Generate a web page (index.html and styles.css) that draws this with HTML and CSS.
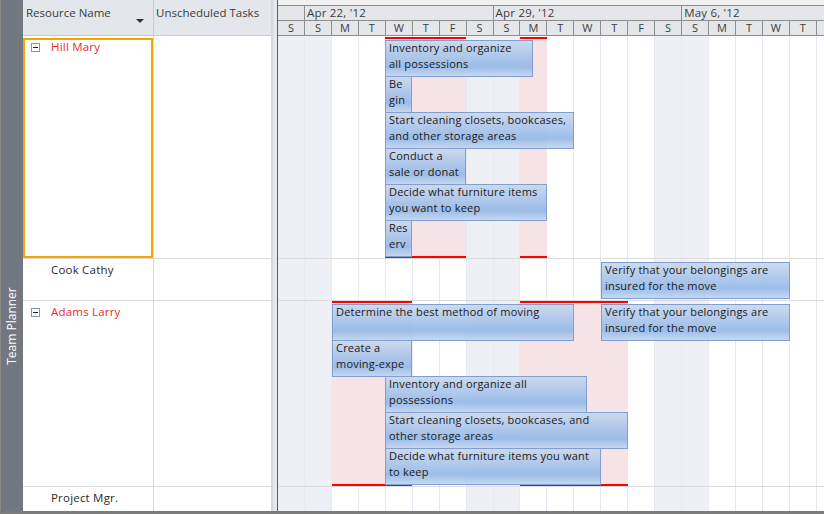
FILE: index.html
```html
<!DOCTYPE html>
<html>
<head>
<meta charset="utf-8">
<link rel="stylesheet" href="styles.css">
</head>
<body>
<div class="app">
  <div class="main">
    <aside class="viewbar"><span class="viewbar-label">Team Planner</span></aside>

    <section class="res-table">
      <div class="th-row">
        <div class="th th-name">Resource Name<span class="sort-arrow"></span></div>
        <div class="th th-unsched">Unscheduled Tasks</div>
      </div>
      <div class="tr tr-hill">
        <div class="td td-name selected"><span class="collapse"></span><span class="name over">Hill Mary</span></div>
        <div class="td td-unsched"></div>
      </div>
      <div class="tr tr-cook">
        <div class="td td-name"><span class="name plain">Cook Cathy</span></div>
        <div class="td td-unsched"></div>
      </div>
      <div class="tr tr-adams">
        <div class="td td-name"><span class="collapse"></span><span class="name over">Adams Larry</span></div>
        <div class="td td-unsched"></div>
      </div>
      <div class="tr tr-pm">
        <div class="td td-name"><span class="name plain">Project Mgr.</span></div>
        <div class="td td-unsched"></div>
      </div>
    </section>

    <div class="splitter"></div>

    <section class="chart">
      <div class="chart-head">
        <div class="head-strip"></div>
        <div class="months">
          <div class="month m-lead"></div>
          <div class="month m-wk">Apr 22, '12</div>
          <div class="month m-wk">Apr 29, '12</div>
          <div class="month m-last">May 6, '12</div>
        </div>
        <div class="days">
          <div class="day">S</div><div class="day">S</div><div class="day">M</div><div class="day">T</div><div class="day">W</div><div class="day">T</div><div class="day">F</div>
          <div class="day">S</div><div class="day">S</div><div class="day">M</div><div class="day">T</div><div class="day">W</div><div class="day">T</div><div class="day">F</div>
          <div class="day">S</div><div class="day">S</div><div class="day">M</div><div class="day">T</div><div class="day">W</div><div class="day">T</div><div class="day"></div>
        </div>
      </div>

      <div class="chart-body">
        <div class="day-cols">
          <div class="col wkend"></div><div class="col wkend"></div><div class="col"></div><div class="col"></div><div class="col"></div><div class="col"></div><div class="col"></div>
          <div class="col wkend"></div><div class="col wkend"></div><div class="col"></div><div class="col"></div><div class="col"></div><div class="col"></div><div class="col"></div>
          <div class="col wkend"></div><div class="col wkend"></div><div class="col"></div><div class="col"></div><div class="col"></div><div class="col"></div><div class="col"></div>
        </div>

        <div class="lane lane-hill">
          <div class="over-zone oz-hill" style="left:107px;width:81px"></div>
          <div class="over-zone oz-hill" style="left:242px;width:27px"></div>
          <div class="over-line ol-hill-top" style="left:107px;width:81px"></div>
          <div class="over-line ol-hill-top" style="left:242px;width:27px"></div>
          <div class="over-line ol-hill-bot" style="left:107px;width:81px"></div>
          <div class="over-line ol-hill-bot" style="left:242px;width:27px"></div>

          <div class="bar" style="left:107px;top:4px;width:148px">Inventory and organize<br>all possessions</div>
          <div class="bar" style="left:107px;top:40px;width:27px">Be<br>gin</div>
          <div class="bar" style="left:107px;top:76px;width:189px">Start cleaning closets, bookcases,<br>and other storage areas</div>
          <div class="bar" style="left:107px;top:112px;width:81px">Conduct a<br>sale or donat</div>
          <div class="bar" style="left:107px;top:148px;width:162px">Decide what furniture items<br>you want to keep</div>
          <div class="bar" style="left:107px;top:184px;width:27px">Res<br>erv</div>
        </div>

        <div class="lane lane-cook">
          <div class="bar" style="left:323px;top:3px;width:189px">Verify that your belongings are<br>insured for the move</div>
        </div>

        <div class="lane lane-adams">
          <div class="over-zone oz-adams" style="left:54px;width:80px"></div>
          <div class="over-zone oz-adams" style="left:242px;width:108px"></div>
          <div class="over-line ol-adams-top" style="left:54px;width:80px"></div>
          <div class="over-line ol-adams-top" style="left:242px;width:108px"></div>
          <div class="over-line ol-adams-bot" style="left:54px;width:80px"></div>
          <div class="over-line ol-adams-bot" style="left:242px;width:108px"></div>

          <div class="bar" style="left:54px;top:3px;width:242px">Determine the best method of moving</div>
          <div class="bar" style="left:323px;top:3px;width:189px">Verify that your belongings are<br>insured for the move</div>
          <div class="bar" style="left:54px;top:39px;width:80px">Create a<br>moving-expe</div>
          <div class="bar" style="left:107px;top:75px;width:202px">Inventory and organize all<br>possessions</div>
          <div class="bar" style="left:107px;top:111px;width:243px">Start cleaning closets, bookcases, and<br>other storage areas</div>
          <div class="bar" style="left:107px;top:147px;width:216px">Decide what furniture items you want<br>to keep</div>
        </div>

        <div class="lane lane-pm"></div>
      </div>
    </section>
  </div>
  <div class="statusline"></div>
</div>
</body>
</html>
```
FILE: styles.css
```css
* { box-sizing: border-box; }

html, body {
  margin: 0;
  padding: 0;
  width: 824px;
  height: 514px;
  overflow: hidden;
  background: #ffffff;
  font-family: "Open Sans", "Noto Sans", "Liberation Sans", sans-serif;
  font-size: 11px;
  color: #262626;
}

.app {
  display: flex;
  flex-direction: column;
  width: 824px;
  height: 514px;
}

.main {
  display: flex;
  flex: 1;
  min-height: 0;
}

.statusline {
  height: 3px;
  background: #7a7a7a;
}

/* ---------- view bar ---------- */
.viewbar {
  width: 23px;
  background: #737880;
  border-left: 1px solid #8e8a85;
  position: relative;
}

.viewbar-label {
  position: absolute;
  left: 50%;
  top: 326px;
  transform: translate(-50%, -50%) rotate(-90deg);
  white-space: nowrap;
  color: #ffffff;
  font-size: 12px;
  line-height: 14px;
}

/* ---------- resource table ---------- */
.res-table {
  width: 249px;
  display: flex;
  flex-direction: column;
  border-right: 1px solid #d6d8de;
}

.th-row {
  display: flex;
  height: 36px;
  background: #e3e6eb;
  border-bottom: 1px solid #c5cad3;
}

.th {
  position: relative;
  padding: 5px 0 0 3px;
  color: #3c3c3c;
  font-size: 11.5px;
  line-height: 16px;
  white-space: nowrap;
}

.th-name {
  width: 131px;
  border-right: 1px solid #c5cad3;
}

.th-unsched {
  flex: 1;
  padding-left: 2px;
}

.sort-arrow {
  position: absolute;
  left: 113px;
  top: 19px;
  width: 0;
  height: 0;
  border-left: 4px solid transparent;
  border-right: 4px solid transparent;
  border-top: 4px solid #333333;
}

.tr {
  display: flex;
  border-bottom: 1px solid #dadada;
}

.tr-hill { height: 223px; }
.tr-cook { height: 42px; }
.tr-adams { height: 186px; }
.tr-pm { height: 24px; border-bottom: none; }

.td-name {
  position: relative;
  width: 131px;
  border-right: 1px solid #dadada;
  display: flex;
  align-items: flex-start;
  padding: 3px 0 0 28px;
}

.td-unsched { flex: 1; }

.td-name.selected::after {
  content: "";
  position: absolute;
  left: 0;
  top: 2px;
  right: 0;
  bottom: 0;
  border: 2px solid #f5a700;
}

.collapse {
  position: absolute;
  left: 8px;
  top: 7px;
  width: 9px;
  height: 9px;
  border: 1px solid #7f95d0;
  background: #ffffff;
}

.collapse::after {
  content: "";
  position: absolute;
  left: 1px;
  top: 3px;
  width: 5px;
  height: 1px;
  background: #1e1e1e;
}

.name {
  font-size: 11.5px;
  line-height: 16px;
  white-space: nowrap;
  letter-spacing: 0.2px;
}

.name.over { color: #ee2a2a; }
.name.plain { color: #2a2a2a; }

/* ---------- splitter ---------- */
.splitter {
  width: 6px;
  background: #e6e8ee;
  border-left: 1px solid #d3d6dc;
  border-right: 1px solid #5e5e5e;
}

/* ---------- chart ---------- */
.chart {
  flex: 1;
  min-width: 0;
  display: flex;
  flex-direction: column;
  overflow: hidden;
}

.chart-head {
  height: 36px;
  display: flex;
  flex-direction: column;
  background: #e4e6ea;
  border-bottom: 1px solid #8e8e8e;
}

.head-strip {
  height: 6px;
  background: #f1f1f1;
  border-bottom: 1px solid #8e8e8e;
}

.months {
  display: flex;
  height: 15px;
  border-bottom: 1px solid #8e8e8e;
}

.month {
  border-right: 1px solid #8e8e8e;
  padding-left: 2px;
  color: #3c3c3c;
  font-size: 11.5px;
  line-height: 14px;
  white-space: nowrap;
  letter-spacing: 0.2px;
}

.m-lead { width: 27px; }
.m-wk { width: 188.6px; }
.m-last { flex: 1; border-right: none; }

.days {
  display: grid;
  grid-template-columns: repeat(21, 26.95px);
  height: 14px;
}

.day {
  border-right: 1px solid #8e8e8e;
  text-align: center;
  color: #3c3c3c;
  font-size: 11px;
  line-height: 14px;
}

.chart-body {
  position: relative;
  flex: 1;
  display: flex;
  flex-direction: column;
}

.day-cols {
  position: absolute;
  inset: 0;
  display: grid;
  grid-template-columns: repeat(21, 26.95px);
}

.col {
  border-right: 1px solid #e3e9f1;
}

.col.wkend {
  background: #eff0f5;
  border-right-color: #e9ebf1;
}

.lane {
  position: relative;
  border-bottom: 1px solid #dcdcdc;
}

.lane-hill { height: 223px; }
.lane-cook { height: 42px; }
.lane-adams { height: 186px; }
.lane-pm { height: 24px; border-bottom: none; }

.over-zone {
  position: absolute;
  background: #f5e3e5;
}

.oz-hill { top: 1px; height: 221px; }
.oz-adams { top: 0; height: 185px; }

.over-line {
  position: absolute;
  height: 2px;
  background: #ff0000;
}

.ol-hill-top { top: 1px; }
.ol-hill-bot { top: 220px; }
.ol-adams-top { top: 0; }
.ol-adams-bot { top: 183px; }

.bar {
  position: absolute;
  height: 37px;
  padding: 0 0 0 4px;
  box-shadow: inset 0 0 0 1px #7f9fd0;
  background: linear-gradient(to bottom, rgba(203,217,237,0.92) 0%, rgba(172,198,234,0.92) 40%, rgba(148,185,232,0.92) 72%, rgba(200,216,240,0.92) 100%);
  color: #1a1a1a;
  font-size: 11px;
  line-height: 16px;
  white-space: nowrap;
  overflow: hidden;
  letter-spacing: 0.2px;
}
```
